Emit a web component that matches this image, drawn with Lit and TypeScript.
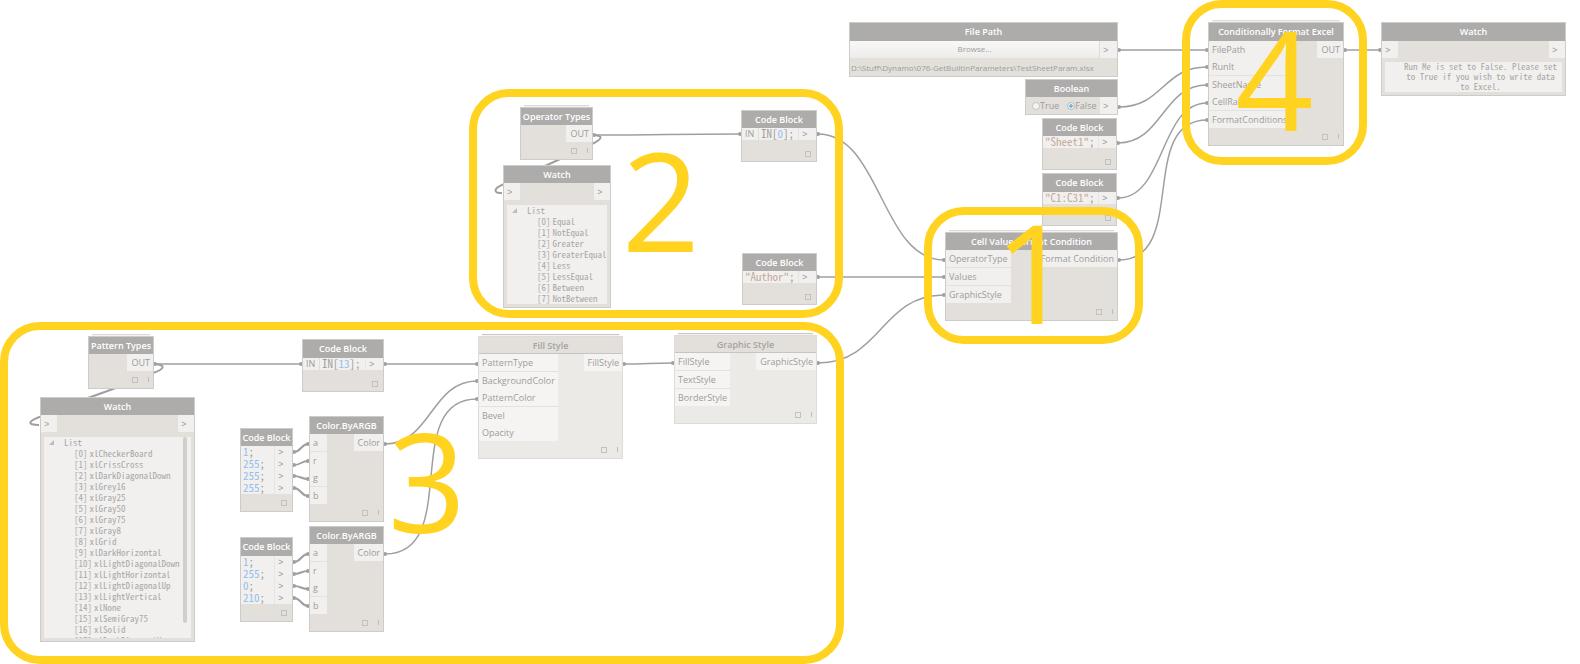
import { LitElement, html, svg, css, nothing } from "lit";
import { customElement, property } from "lit/decorators.js";
import { classMap } from "lit/directives/class-map.js";
import { styleMap } from "lit/directives/style-map.js";

interface Port {
  name: string;
  /** draws a divider above this port */
  rule?: boolean;
}

interface GraphNode {
  kind: "plain" | "code" | "watch" | "message" | "file" | "boolean";
  title: string;
  x: number;
  y: number;
  w: number;
  inputs?: Port[];
  outputs?: Port[];
  code?: string[];
  items?: string[];
  listHeight?: number;
  scroll?: boolean;
  message?: string;
  stacked?: boolean;
  idle?: boolean;
  roomy?: boolean;
}

const ports = (...names: string[]): Port[] =>
  names.map((n) => (n.startsWith("-") ? { name: n.slice(1), rule: true } : { name: n }));

const NODES: GraphNode[] = [
  { kind: "plain", title: "Operator Types", x: 520, y: 107, w: 73, outputs: ports("OUT"), stacked: true },
  {
    kind: "watch", title: "Watch", x: 503, y: 165, w: 108, listHeight: 99,
    items: ["Equal", "NotEqual", "Greater", "GreaterEqual", "Less", "LessEqual", "Between", "NotBetween"],
  },
  { kind: "code", title: "Code Block", x: 741, y: 110, w: 76, inputs: ports("IN"), code: ["IN[0];"] },
  { kind: "code", title: "Code Block", x: 742, y: 253, w: 75, code: ['"Author";'] },
  { kind: "plain", title: "Pattern Types", x: 88, y: 336, w: 66, outputs: ports("OUT"), stacked: true },
  {
    kind: "watch", title: "Watch", x: 40, y: 397, w: 155, listHeight: 201, scroll: true,
    items: [
      "xlCheckerBoard", "xlCrissCross", "xlDarkDiagonalDown", "xlGrey16", "xlGray25", "xlGray50",
      "xlGray75", "xlGray8", "xlGrid", "xlDarkHorizontal", "xlLightDiagonalDown", "xlLightHorizontal",
      "xlLightDiagonalUp", "xlLightVertical", "xlNone", "xlSemiGray75", "xlSolid", "xlDarkDiagonalUp",
    ],
  },
  { kind: "code", title: "Code Block", x: 302, y: 339, w: 82, inputs: ports("IN"), code: ["IN[13];"], roomy: true },
  { kind: "code", title: "Code Block", x: 240, y: 428, w: 53, code: ["1;", "255;", "255;", "255;"] },
  { kind: "code", title: "Code Block", x: 240, y: 537, w: 53, code: ["1;", "255;", "0;", "210;"], roomy: true },
  { kind: "plain", title: "Color.ByARGB", x: 309, y: 416, w: 75, inputs: ports("a", "-r", "g", "-b"), outputs: ports("Color") },
  { kind: "plain", title: "Color.ByARGB", x: 309, y: 526, w: 75, inputs: ports("a", "-r", "g", "-b"), outputs: ports("Color") },
  {
    kind: "plain", title: "Fill Style", x: 478, y: 336, w: 145, stacked: true, idle: true,
    inputs: ports("PatternType", "-BackgroundColor", "PatternColor", "-Bevel", "Opacity"), outputs: ports("FillStyle"),
  },
  {
    kind: "plain", title: "Graphic Style", x: 674, y: 335, w: 143, stacked: true, idle: true,
    inputs: ports("FillStyle", "-TextStyle", "-BorderStyle"), outputs: ports("GraphicStyle"),
  },
  { kind: "file", title: "File Path", x: 849, y: 22, w: 269, roomy: true },
  { kind: "boolean", title: "Boolean", x: 1025, y: 79, w: 93 },
  { kind: "code", title: "Code Block", x: 1042, y: 118, w: 75, code: ['"Sheet1";'] },
  { kind: "code", title: "Code Block", x: 1042, y: 173, w: 75, code: ['"C1:C31";'], roomy: true },
  {
    kind: "plain", title: "Cell Value Format Condition", x: 945, y: 232, w: 173, stacked: true,
    inputs: ports("OperatorType", "-Values", "-GraphicStyle"), outputs: ports("Format Condition"),
  },
  {
    kind: "plain", title: "Conditionally Format Excel", x: 1208, y: 22, w: 136, stacked: true, roomy: true,
    inputs: ports("FilePath", "RunIt", "-SheetName", "CellRange", "-FormatConditions"), outputs: ports("OUT"),
  },
  {
    kind: "message", title: "Watch", x: 1381, y: 22, w: 185, roomy: true,
    message: "Run Me is set to False. Please set to True if you wish to write data to Excel.",
  },
];

type Wire = [number, number, number, number];

const WIRES: Wire[] = [
  [155, 364, 301, 364], [385, 364, 477, 364], [385, 444, 477, 381], [385, 554, 477, 399],
  [624, 364, 673, 363], [818, 363, 944, 295],
  [594, 135, 740, 134], [818, 134, 944, 260], [818, 277, 944, 277],
  [1119, 50, 1207, 50], [1119, 107, 1207, 67], [1118, 143, 1207, 85],
  [1118, 198, 1207, 103], [1119, 260, 1207, 120], [1345, 50, 1380, 50],
];

const SHORT_WIRES: Wire[] = [
  [294, 452, 308, 444], [294, 465, 308, 461], [294, 476, 308, 479], [294, 488, 308, 496],
  [294, 562, 308, 554], [294, 574, 308, 571], [294, 586, 308, 589], [294, 598, 308, 606],
];

const LOOPS = [
  "M155 364 C166 365 165 369 153 373 L113 389 L88 398 L42 416 C28 421 26 425 39 425",
  "M594 135 C604 136 602 139 592 144 L558 160 L545 166 L504 184 C492 189 494 193 502 193",
];

const CALLOUTS = [
  { label: "1", x: 924, y: 207, w: 219, h: 137 },
  { label: "2", x: 469, y: 89, w: 374, h: 229, wide: true },
  { label: "3", x: 0, y: 322, w: 844, h: 342, wide: true, raised: true },
  { label: "4", x: 1182, y: 0, w: 185, h: 165 },
];

const px = (n: number) => `${n}px`;

@customElement("graph-node")
class GraphNodeView extends LitElement {
  @property({ attribute: false }) node!: GraphNode;

  static styles = css`
    :host {
      display: block;
      color: #9d9c9b;
      font: 9px/17px "Open Sans", sans-serif;
      white-space: nowrap;
    }
    .node {
      position: relative;
      box-sizing: border-box;
      border: 1px solid #cdccc9;
      background: #e3e0dc;
    }
    .stacked::before {
      content: "";
      position: absolute;
      top: -3px;
      left: 3px;
      right: 3px;
      height: 1px;
      border-top: 1px solid #dcdbd8;
      background: #f3f2f0;
    }
    .title {
      margin: 0;
      background: #adacab;
      color: #fff;
      font-size: 9px;
      font-weight: 600;
      line-height: 17px;
      text-align: center;
    }
    .roomy .title { line-height: 18px; }
    .idle { background: #ebeae6; border-color: #dddcd9; }
    .idle .title {
      box-sizing: border-box;
      height: 17px;
      background: #e3e0dc;
      border-bottom: 1px solid #c6c5c3;
      color: #a3a2a1;
    }
    .idle.stacked::before { border-top-color: #c9c8c6; }
    .ports { display: flex; justify-content: space-between; align-items: flex-start; }
    .port { box-sizing: border-box; min-width: 17px; padding: 0 3px; background: #f1f0ee; }
    .outputs .port { padding: 0 3px 0 4px; }
    .idle .port { background: #f5f4f2; }
    .rule { border-top: 1px solid #e3e2df; }
    .footer { display: flex; justify-content: flex-end; align-items: center; gap: 10px; height: 17px; padding-right: 4px; }
    .box { box-sizing: border-box; width: 6px; height: 6px; border: 1px solid #c3c1be; }
    .bar { width: 1px; height: 5px; background: #bfbdbb; }
    .arrow {
      box-sizing: border-box;
      width: 16px;
      height: 17px;
      padding: 0 3px;
      background: #f1f0ee;
      font-family: "Liberation Mono", monospace;
      line-height: 20px;
    }

    .editor { display: flex; line-height: 12px; background: #f1f0ee; }
    .editor .port { border-right: 1px solid #e0dfdc; }
    .lines { flex: 1; padding-left: 2px; }
    .line { display: block; height: 12px; font: 11px/10px "Noto Sans Mono CJK SC", "Liberation Mono", monospace; }
    .number { color: #93bfee; }
    .string { color: #c4a999; }
    .outs { border-left: 1px solid #e6e5e2; }
    .outs .arrow { width: 17px; height: 12px; line-height: 14px; }
    .code .footer { height: 17px; padding-right: 5px; }
    .single .footer { height: 14px; padding-top: 7px; }

    .panel {
      position: relative;
      margin: 5px 3px 3px;
      overflow: hidden;
      background: #f1f0ee;
      color: #a8a7a6;
      font-family: "Noto Sans Mono CJK SC", "Liberation Mono", monospace;
      font-size: 9px;
      line-height: 11px;
    }
    .tree, .items { margin: 0; padding: 0; list-style: none; }
    .root { display: flex; align-items: center; gap: 10px; padding-left: 5px; }
    .items { padding-left: 30px; }
    .item { display: flex; gap: 2px; height: 11px; }
    .thumb { position: absolute; top: 0; right: 4px; width: 4px; height: 186px; border-radius: 2px; background: #d0cfce; }
    .message { margin: 4px 3px 3px; padding: 0 2px 0 16px; line-height: 10px; text-align: center; white-space: normal; }

    .file { display: flex; }
    .browse {
      flex: 1;
      height: 17px;
      padding: 0 0 2px;
      border: 0;
      border-right: 1px solid #dddcd9;
      background: linear-gradient(#f8f8f7, #edecea);
      color: inherit;
      font: inherit;
      font-size: 8px;
      line-height: 15px;
    }
    .file .arrow { width: 17px; }
    .path { padding: 2px 0 0 1px; font-size: 8px; line-height: 16px; }
    .choices { display: flex; align-items: center; height: 17px; }
    .choice { display: flex; align-items: center; margin-left: 6px; line-height: 17px; }
    .choice + .choice { margin-left: 8px; }
    .choices .arrow { width: 17px; margin-left: auto; }
    .radio {
      appearance: none;
      box-sizing: border-box;
      width: 8px;
      height: 8px;
      margin: 0;
      border: 1px solid #c4c4c4;
      border-radius: 50%;
      background: #f4f4f3;
    }
    .radio:checked { border-color: #b4bcc2; background: radial-gradient(#7fb3cf 35%, #eef2f4 50%); }
  `;

  private arrow() {
    return html`<div class="arrow">&gt;</div>`;
  }

  private portList(list: Port[] | undefined, side: string) {
    return html`<div class=${side}>
      ${(list ?? []).map((p) => html`<div class=${classMap({ port: true, rule: !!p.rule })}>${p.name}</div>`)}
    </div>`;
  }

  private codeLine(text: string) {
    const tokens = text.match(/"[^"]*"|\d+|[^"\d]+/g) ?? [];
    return html`<code class="line">${tokens.map((t) =>
      t.startsWith('"') ? html`<span class="string">${t}</span>`
        : /^\d/.test(t) ? html`<span class="number">${t}</span>`
          : t)}</code>`;
  }

  private body() {
    const n = this.node;
    switch (n.kind) {
      case "code":
        return html`
          <div class="editor">
            ${n.inputs ? this.portList(n.inputs, "inputs") : nothing}
            <div class="lines">${n.code!.map((l) => this.codeLine(l))}</div>
            <div class="outs">${n.code!.map(() => this.arrow())}</div>
          </div>
          <div class="footer"><span class="box"></span></div>`;
      case "watch":
        return html`
          <div class="ports">${this.arrow()}${this.arrow()}</div>
          <div class="panel" style=${styleMap({ height: px(n.listHeight!) })}>
            <ul class="tree">
              <li>
                <div class="root">
                  <svg width="5" height="5" viewBox="0 0 5 5"><path d="M5 0V5H0Z" fill="#bcbbba" /></svg>
                  <span>List</span>
                </div>
                <ul class="items">
                  ${n.items!.map((t, i) => html`<li class="item"><span>[${i}]</span><span>${t}</span></li>`)}
                </ul>
              </li>
            </ul>
            ${n.scroll ? html`<div class="thumb"></div>` : nothing}
          </div>`;
      case "message":
        return html`
          <div class="ports">${this.arrow()}${this.arrow()}</div>
          <div class="panel message">${n.message}</div>`;
      case "file":
        return html`
          <div class="file"><button class="browse">Browse...</button>${this.arrow()}</div>
          <div class="path">D:\\Stuff\\Dynamo\\076-GetBuiltInParameters\\TestSheetParam.xlsx</div>`;
      case "boolean":
        return html`<div class="choices">
          <label class="choice"><input class="radio" type="radio" name="value" />True</label>
          <label class="choice"><input class="radio" type="radio" name="value" checked />False</label>
          ${this.arrow()}
        </div>`;
      default:
        return html`
          <div class="ports">
            ${this.portList(n.inputs, "inputs")}${this.portList(n.outputs, "outputs")}
          </div>
          <div class="footer"><span class="box"></span><span class="bar"></span></div>`;
    }
  }

  render() {
    const n = this.node;
    const classes = {
      node: true,
      stacked: !!n.stacked,
      idle: !!n.idle,
      roomy: !!n.roomy,
      code: n.kind === "code",
      single: n.code?.length === 1,
    };
    return html`<section class=${classMap(classes)}>
      <h2 class="title">${n.title}</h2>
      ${this.body()}
    </section>`;
  }
}

@customElement("app-root")
class AppRoot extends LitElement {
  static styles = css`
    :host { display: block; background: #fff; }
    .canvas { position: relative; min-height: 100vh; overflow: hidden; }
    .wires { position: absolute; inset: 0; width: 100%; height: 100%; fill: none; stroke: #a09f9f; stroke-width: 1.5; }
    .short { stroke-width: 2; }
    .dots { fill: #a09f9f; stroke: none; }
    .place { position: absolute; }
    .callout {
      position: absolute;
      box-sizing: border-box;
      display: flex;
      align-items: center;
      justify-content: center;
      padding-bottom: 9px;
      border: 8px solid #ffd320;
      border-radius: 40px;
      color: #ffd320;
      font: 500 137px/1 "Open Sans", sans-serif;
      pointer-events: none;
    }
    .wide { padding-left: 10px; }
    .raised { padding-bottom: 26px; }
  `;

  private curve([x1, y1, x2, y2]: Wire) {
    const reach = Math.max(x2 - x1, Math.abs(y2 - y1)) / 2;
    return svg`<path d=${`M${x1} ${y1} C${x1 + reach} ${y1} ${x2 - reach} ${y2} ${x2} ${y2}`} />`;
  }

  render() {
    return html`<main class="canvas">
      <svg class="wires" aria-hidden="true">
        ${WIRES.map((w) => this.curve(w))}
        <g class="short">
          ${LOOPS.map((d) => svg`<path d=${d} />`)}
          ${SHORT_WIRES.map((w) => this.curve(w))}
        </g>
        <g class="dots">
          ${[...WIRES, ...SHORT_WIRES].map(([x1, y1, x2, y2]) => svg`
            <circle cx=${x1} cy=${y1} r="2" /><circle cx=${x2} cy=${y2} r="2" />`)}
        </g>
      </svg>
      ${NODES.map((n) => html`<graph-node class="place" .node=${n}
        style=${styleMap({ left: px(n.x), top: px(n.y), width: px(n.w) })}></graph-node>`)}
      ${CALLOUTS.map((c) => html`<div class=${classMap({ callout: true, wide: !!c.wide, raised: !!c.raised })}
        style=${styleMap({ left: px(c.x), top: px(c.y), width: px(c.w), height: px(c.h) })}>${c.label}</div>`)}
    </main>`;
  }
}
